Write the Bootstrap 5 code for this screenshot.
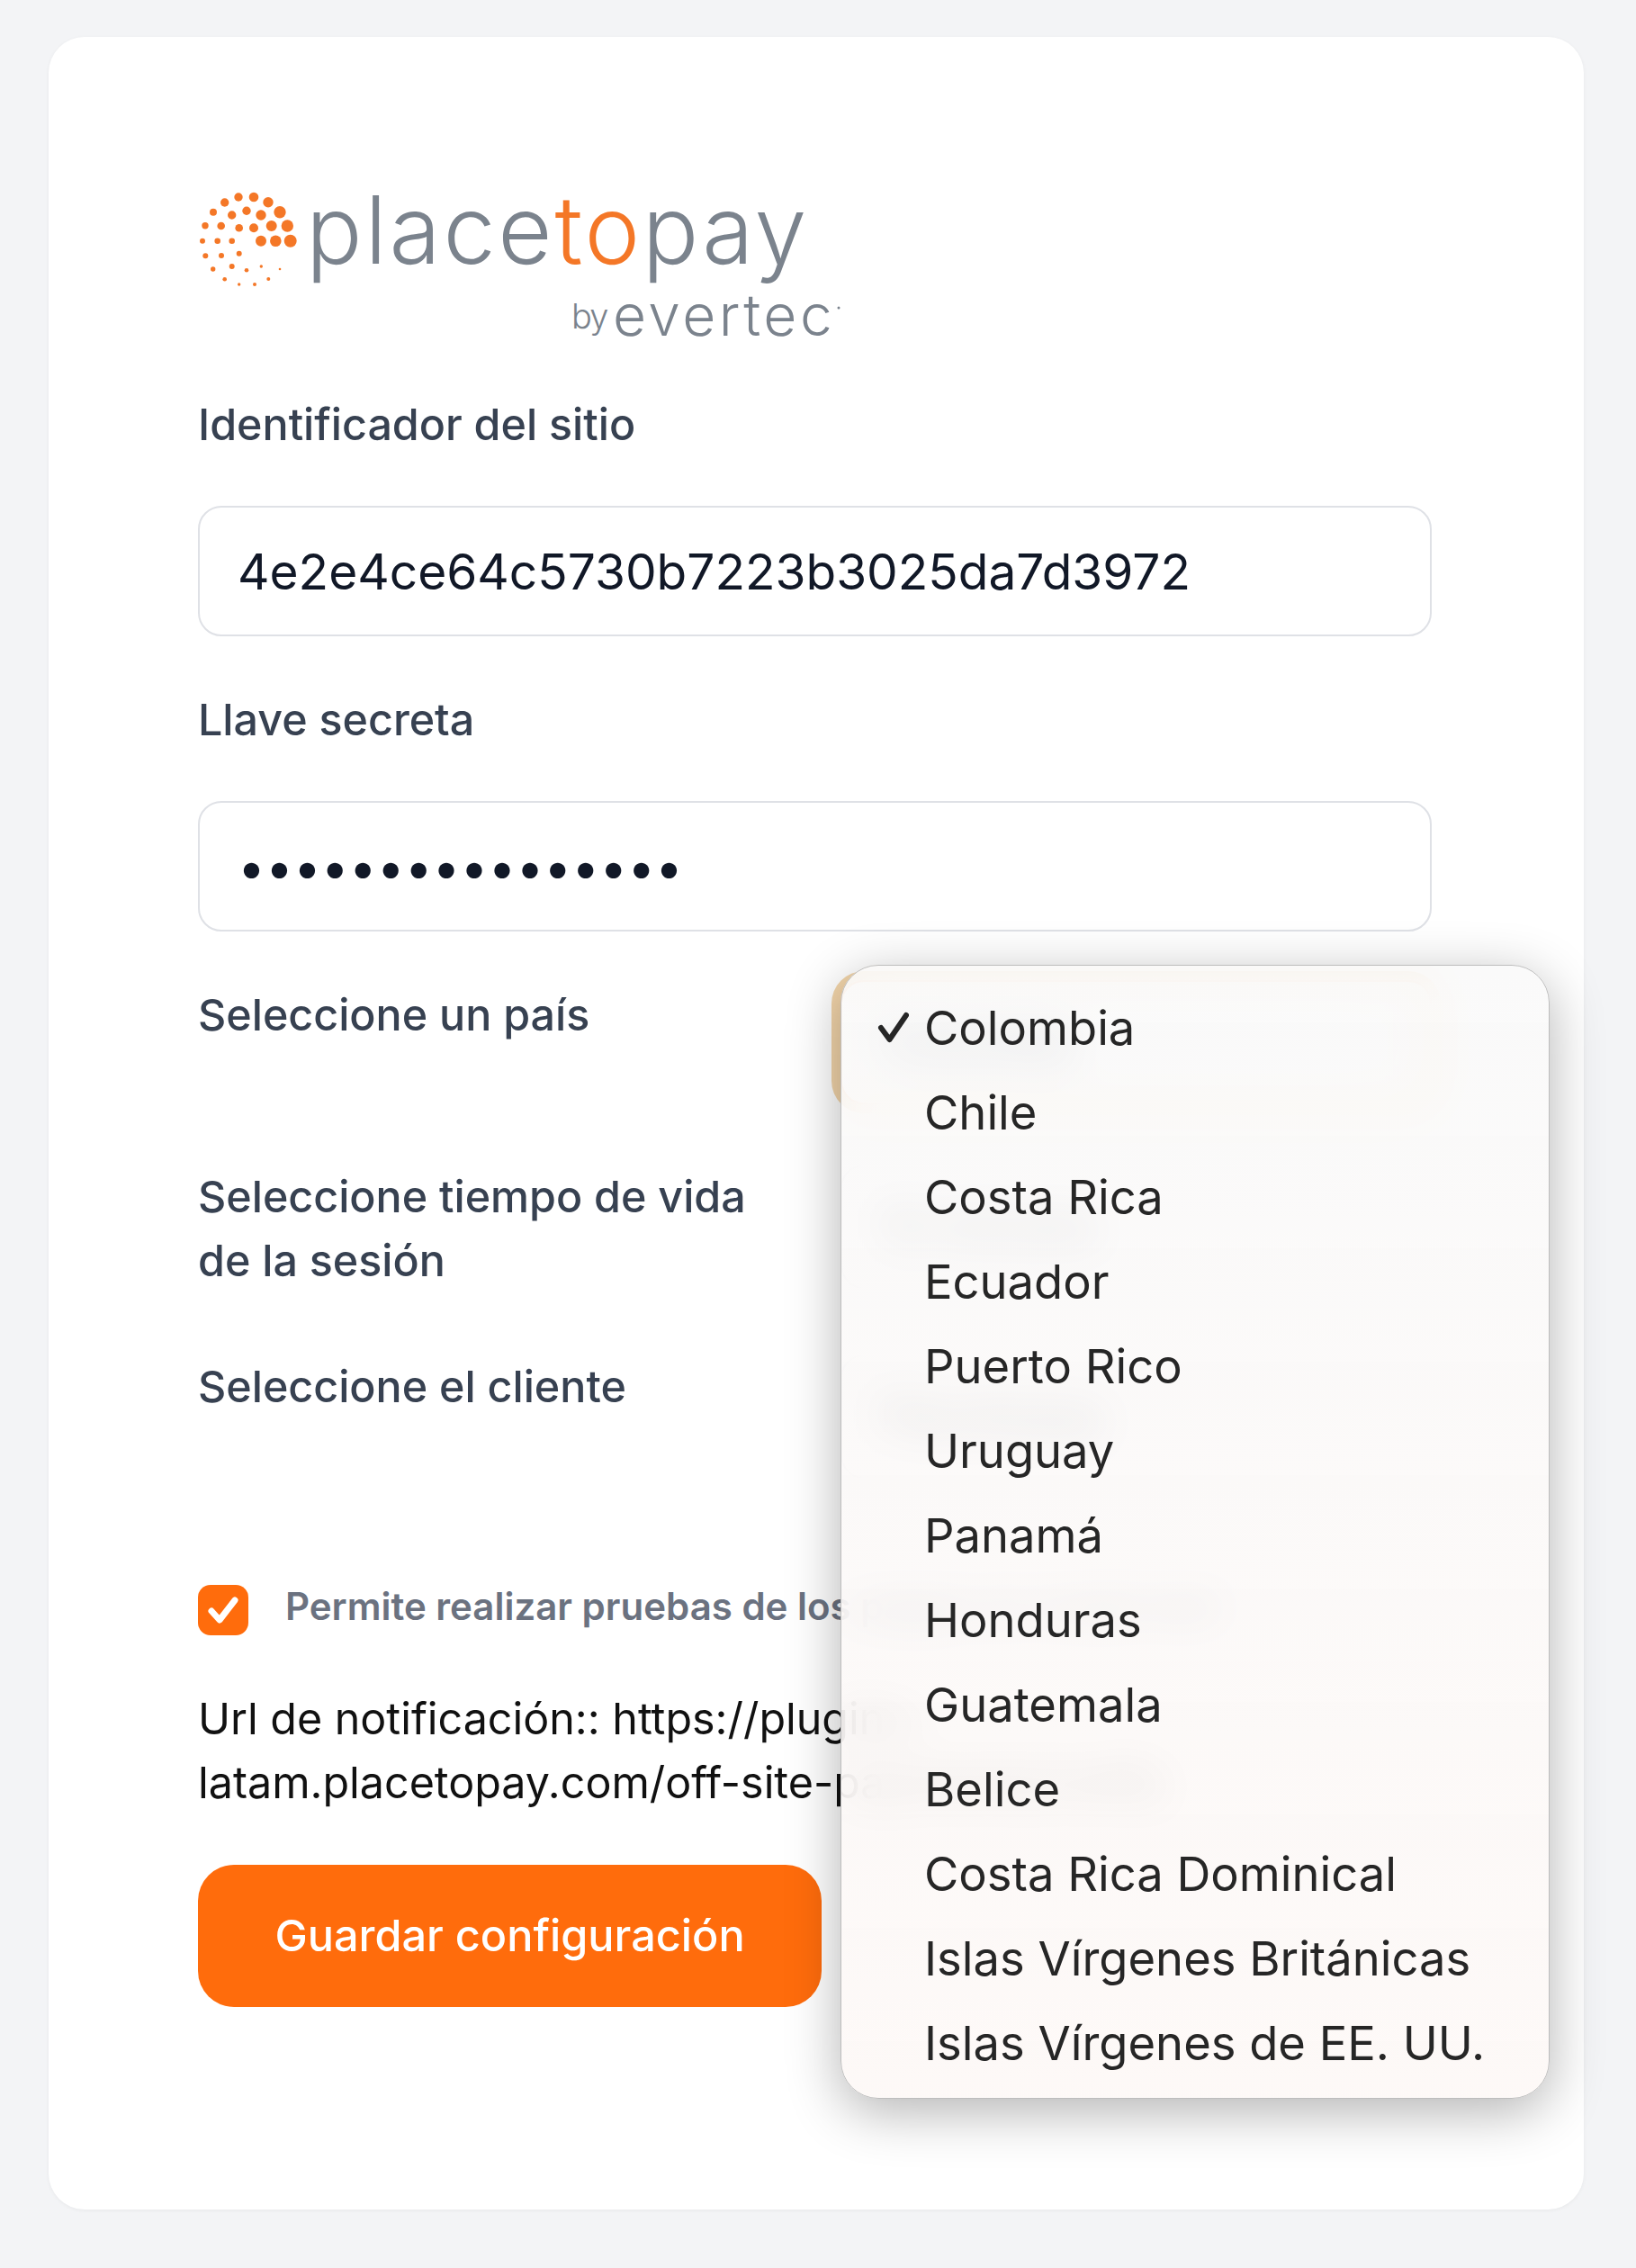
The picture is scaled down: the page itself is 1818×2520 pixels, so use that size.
<!DOCTYPE html>
<html lang="es">
<head>
  <meta charset="UTF-8" />
  <title>Configuración Placetopay</title>
  <link href="https://cdn.jsdelivr.net/npm/bootstrap@5.3.0/dist/css/bootstrap.min.css" rel="stylesheet" />
  <style>
    body { background: #f3f4f6; font-family: Inter, "Liberation Sans", sans-serif; overflow: hidden; height: 2520px; }
    .shell { padding: 41px 58px 0 54px; }
    .panel { position: relative; height: 2414px; background: #fff; border-radius: 40px; padding: 139px 169px 0 166px; box-shadow: 0 1px 4px rgba(0,0,0,.05); overflow: visible; }
    .brand { display: block; width: 740px; height: 210px; margin-bottom: 46px; }
    .brand-main { font-family: Inter, sans-serif; font-weight: 300; font-size: 104px; letter-spacing: 2.8px; fill: #7b838d; }
    .brand-main .hot { fill: #f47727; }
    .brand-by { font-family: Inter, sans-serif; font-weight: 300; font-size: 38px; letter-spacing: -2px; fill: #7b838d; }
    .brand-ever { font-family: Inter, sans-serif; font-weight: 300; font-size: 64px; letter-spacing: 3.5px; fill: #7b838d; }
    .field-label { display: block; color: #374151; font-size: 48.4px; font-weight: 500; line-height: 71px; margin-bottom: 0; }
    .field-input { height: 145px; border: 2px solid #dfe1e6; border-radius: 26px; font-size: 55px; color: #111827; padding: 0 42px; margin: 55px 0 57px; box-shadow: none; }
    .pick-row { display: grid; grid-template-columns: 714px 1fr; }
    .pick-row .field-label { padding-right: 50px; }
    .field-select { height: 138px; border: 2px solid #dfe1e6; border-radius: 26px; font-size: 48px; color: #111827; padding: 0 42px; background-size: 32px 24px; background-position: right 36px center; }
    .field-select.is-open { border-color: #f8b27e; box-shadow: 0 0 0 10px #f3d5aa; background-color: #fff; }
    .row-a { height: 202px; }
    .row-b { height: 211px; }
    .row-c { height: 225px; }
    .row-a .field-select { margin-top: -3px; }
    .tick { width: 56px; height: 56px; background: #ff6c0c; border-radius: 14px; flex-shrink: 0; }
    .tick-label { color: #6b7280; font-size: 42px; font-weight: 600; white-space: nowrap; margin-left: 41px; line-height: 50px; margin-top: -8px; }
    .check-row { height: 118px; margin-bottom: 26px; }
    .hook-url { color: #111; font-size: 48.4px; line-height: 71px; margin-bottom: 0; white-space: nowrap; }
    .save-btn { display: block; width: 693px; height: 158px; margin-top: 56px; background: #ff6c0c; border: 0; border-radius: 40px; color: #fff; font-size: 48.6px; font-weight: 500; }
    .save-btn:hover { background: #ff6c0c; color: #fff; }
    .country-menu { position: absolute; left: 880px; top: 1031px; width: 788px; height: 1260px; padding: 22px 0 0; margin: 0; border: 1px solid #bdbdbd; border-radius: 42px; background: linear-gradient(rgba(249,249,249,.84), rgba(253,248,246,.88)); -webkit-backdrop-filter: blur(24px); backdrop-filter: blur(24px); box-shadow: 0 14px 60px rgba(0,0,0,.3); display: block; overflow: hidden; }
    .country-menu .dropdown-item { display: flex; align-items: center; height: 94px; padding: 0 0 0 92px; font-size: 52.5px; color: #262626; background: transparent; position: relative; }
    .country-menu .mark-ok { position: absolute; left: 40px; top: 29px; width: 35px; height: 36px; }
  </style>
</head>
<body>
  <div class="shell">
    <div class="panel">
      <svg class="brand" viewBox="0 -20 740 210" role="img" aria-label="placetopay by evertec">
        <g id="dots" fill="#f47727"></g>
        <text class="brand-main" x="120" y="93">place<tspan class="hot">to</tspan>pay</text>
        <text class="brand-by" x="415" y="165">by</text>
        <text class="brand-ever" x="461" y="173">evertec</text>
        <circle cx="712" cy="142" r="1.5" fill="#7b838d"/>
      </svg>

      <label class="field-label">Identificador del sitio</label>
      <input class="form-control field-input" type="text" value="4e2e4ce64c5730b7223b3025da7d3972" />

      <label class="field-label">Llave secreta</label>
      <input class="form-control field-input" type="password" value="abcdefghijklmnop" />

      <div class="pick-row row-a">
        <label class="field-label">Seleccione un país</label>
        <select class="form-select field-select is-open"><option>Colombia</option></select>
      </div>
      <div class="pick-row row-b">
        <label class="field-label">Seleccione tiempo de vida de la sesión</label>
        <select class="form-select field-select"><option>10 minutos</option></select>
      </div>
      <div class="pick-row row-c">
        <label class="field-label">Seleccione el cliente</label>
        <select class="form-select field-select"><option>Placetopay</option></select>
      </div>

      <div class="d-flex align-items-center check-row">
        <div class="tick d-flex align-items-center justify-content-center">
          <svg width="40" height="34" viewBox="0 0 40 34"><path d="M7 18l9 10L33 6" fill="none" stroke="#fff" stroke-width="7" stroke-linecap="round" stroke-linejoin="round"/></svg>
        </div>
        <span class="tick-label">Permite realizar pruebas de los pagos en modo test</span>
      </div>

      <p class="hook-url">Url de notificación:: https://plugins-<br />latam.placetopay.com/off-site-payments/notify</p>

      <button type="button" class="btn save-btn">Guardar configuración</button>

      <ul class="dropdown-menu show country-menu list-unstyled" id="countries"></ul>
    </div>
  </div>

  <script src="https://cdn.jsdelivr.net/npm/bootstrap@5.3.0/dist/js/bootstrap.bundle.min.js"></script>
  <script>
    // puntos del logo: x, y, radio (medidos sobre el recorte x3)
    const dots = [[165,57,14],[216,57,16],[264,74,17],[119,75,14],[81,107,12],[143,117,14],[192,103,14],[240,117,17],[303,107,20],[54,152,11],[107,153,13],[167,160,13],[216,160,15],[275,153,18],[328,153,20],[45,203,9],[95,203,10],[143,203,10],[240,203,18],[289,203,19],[338,203,21],[55,253,9],[108,252,9],[167,245,9],[80,297,8],[143,288,9],[192,301,7],[241,288,5],[303,297,4],[119,331,7],[167,348,5],[219,348,6],[265,330,6]];
    document.getElementById("dots").innerHTML = dots.map(d =>
      `<circle cx="${(d[0] / 3 - 10).toFixed(1)}" cy="${(d[1] / 3).toFixed(1)}" r="${(d[2] / 3).toFixed(1)}"/>`).join("");

    const countries = ["Colombia","Chile","Costa Rica","Ecuador","Puerto Rico","Uruguay","Panamá","Honduras","Guatemala","Belice","Costa Rica Dominical","Islas Vírgenes Británicas","Islas Vírgenes de EE. UU."];
    document.getElementById("countries").innerHTML = countries.map((c, i) => `
      <li><span class="dropdown-item">${i === 0 ? '<svg class="mark-ok" viewBox="0 0 35 36"><path d="M4 18l9.5 13L32 4" fill="none" stroke="#262626" stroke-width="6" stroke-linecap="round" stroke-linejoin="round"/></svg>' : ''}${c}</span></li>`).join("");
  </script>
</body>
</html>
